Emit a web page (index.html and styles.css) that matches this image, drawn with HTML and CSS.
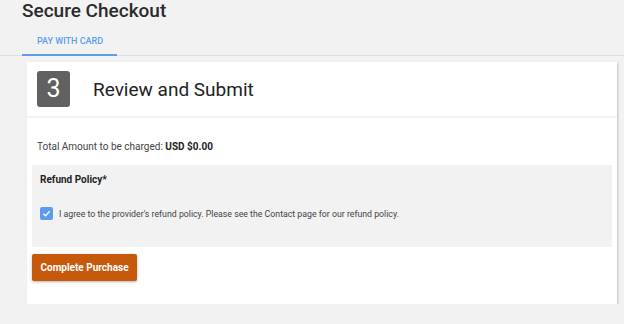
FILE: index.html
```html
<!DOCTYPE html>
<html lang="en">
<head>
<meta charset="UTF-8">
<meta name="viewport" content="width=device-width, initial-scale=1.0">
<title>Secure Checkout</title>
<link rel="stylesheet" href="styles.css">
</head>
<body>

<div class="page">
    <h1 class="title">Secure Checkout</h1>

    <div class="tabs">
        <div class="tab active">PAY WITH CARD</div>
    </div>

    <div class="card">
        <div class="card-header">
            <div class="step">3</div>
            <h2>Review and Submit</h2>
        </div>
        <div class="card-body">
            <p class="total">Total Amount to be charged: <b>USD $0.00</b></p>

            <div class="policy">
                <p class="policy-title">Refund Policy*</p>
                <label class="agree">
                    <span class="checkbox">
                        <svg width="9" height="9" viewBox="0 0 10 10"><path d="M1.5 5.2 L4 7.5 L8.5 2.5" fill="none" stroke="#fff" stroke-width="1.4"/></svg>
                    </span>
                    I agree to the provider's refund policy. Please see the Contact page for our refund policy.
                </label>
            </div>

            <button class="purchase">Complete Purchase</button>
        </div>
    </div>
</div>

</body>
</html>
```

FILE: styles.css
```css
body {
    font-family: Roboto, Arial, sans-serif;
    background-color: #f2f2f2;
    margin: 0;
    padding: 0;
    color: #333;
}

.page {
    padding-left: 22px;
}

.title {
    margin: 0;
    font-size: 19px;
    font-weight: 500;
    line-height: 22px;
    color: #2b2b2b;
}

.tabs {
    display: flex;
    border-bottom: 1px solid #e0e0e0;
    margin-left: -22px;
    padding-left: 22px;
}

.tab {
    font-size: 9px;
    font-weight: 500;
    line-height: 12px;
    padding: 13px 14px 7px 15px;
    color: #5b9cf0;
    margin-bottom: -1px;
}

.tab.active {
    border-bottom: 2px solid #5b9cf0;
}

.card {
    background-color: #fff;
    margin: 6px 7px 0 5px;
    box-shadow: 1px 1px 2px rgba(0, 0, 0, 0.2);
}

.card-header {
    display: flex;
    align-items: center;
    padding: 9px 10px;
    border-bottom: 2px solid #f2f2f2;
}

.step {
    width: 33px;
    height: 36px;
    line-height: 36px;
    background-color: #616161;
    border-radius: 3px;
    color: #fff;
    font-size: 25px;
    text-align: center;
}

.card-header h2 {
    margin: 0 0 0 23px;
    font-size: 19px;
    font-weight: 400;
    color: #222;
}

.card-body {
    padding: 22px 5px 23px;
}

.total {
    margin: 0 0 11px 5px;
    font-size: 10px;
    line-height: 14px;
    color: #444;
}

.total b {
    color: #222;
}

.policy {
    background-color: #f2f2f2;
    padding: 8px 8px 27px;
}

.policy-title {
    margin: 0;
    font-size: 10px;
    font-weight: 700;
    line-height: 14px;
    color: #222;
}

.agree {
    display: flex;
    align-items: center;
    margin-top: 20px;
    font-size: 8.75px;
    color: #444;
}

.checkbox {
    display: flex;
    align-items: center;
    justify-content: center;
    width: 13px;
    height: 13px;
    border-radius: 2px;
    background-color: #5b9cf0;
    margin-right: 6px;
}

.purchase {
    margin-top: 7px;
    width: 105px;
    height: 27px;
    border: none;
    border-radius: 2px;
    background-color: #c5590c;
    color: #fff;
    font-family: Roboto, Arial, sans-serif;
    font-size: 10px;
    font-weight: 700;
    box-shadow: 0 1px 3px rgba(0, 0, 0, 0.3);
    cursor: pointer;
}
```
